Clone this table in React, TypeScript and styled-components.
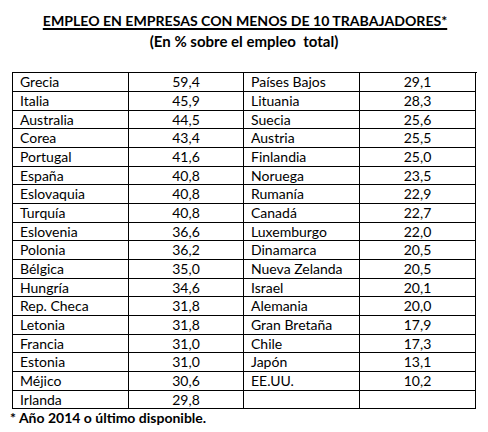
import styled, { createGlobalStyle } from "styled-components"

const GlobalStyle = createGlobalStyle`
  body{
    margin:0;
    background:#fff;
    font-family:Lato, "Open Sans", sans-serif;
    color:#000;
  }
`

const left: [string, string][] = [
  ['Grecia', '59,4'], ['Italia', '45,9'], ['Australia', '44,5'], ['Corea', '43,4'],
  ['Portugal', '41,6'], ['España', '40,8'], ['Eslovaquia', '40,8'], ['Turquía', '40,8'],
  ['Eslovenia', '36,6'], ['Polonia', '36,2'], ['Bélgica', '35,0'], ['Hungría', '34,6'],
  ['Rep. Checa', '31,8'], ['Letonia', '31,8'], ['Francia', '31,0'], ['Estonia', '31,0'],
  ['Méjico', '30,6'], ['Irlanda', '29,8'],
]

const right: [string, string][] = [
  ['Países Bajos', '29,1'], ['Lituania', '28,3'], ['Suecia', '25,6'], ['Austria', '25,5'],
  ['Finlandia', '25,0'], ['Noruega', '23,5'], ['Rumanía', '22,9'], ['Canadá', '22,7'],
  ['Luxemburgo', '22,0'], ['Dinamarca', '20,5'], ['Nueva Zelanda', '20,5'], ['Israel', '20,1'],
  ['Alemania', '20,0'], ['Gran Bretaña', '17,9'], ['Chile', '17,3'], ['Japón', '13,1'],
  ['EE.UU.', '10,2'], ['', ''],
]

const App = () => {
  return <Page>
    <GlobalStyle />
    <Title>EMPLEO EN EMPRESAS CON MENOS DE 10 TRABAJADORES*</Title>
    <Subtitle>(En % sobre el empleo&nbsp; total)</Subtitle>
    <Table>
      {left.map((row, i) => <Row key={i}>
        <Cell>{row[0]}</Cell>
        <Cell $num>{row[1]}</Cell>
        <Cell>{right[i][0]}</Cell>
        <Cell $num>{right[i][1]}</Cell>
      </Row>)}
    </Table>
    <Note>* Año 2014 o último disponible.</Note>
  </Page>
}

const Page = styled.div`
  width:488px;
  height:432px;
  padding-top:11px;
  box-sizing:border-box;
`

const Title = styled.h1`
  margin:0;
  font-size:14.1px;
  font-weight:700;
  text-align:center;
  text-decoration:underline;
  text-underline-offset:2px;
  text-decoration-thickness:1.5px;
  line-height:20px;
  padding-left:2px;
`

const Subtitle = styled.h2`
  margin:0;
  font-size:15px;
  font-weight:700;
  text-align:center;
  line-height:20px;
`

const Table = styled.div`
  margin:21px 0 0 12px;
  width:464px;
  display:grid;
  grid-template-columns:116px 115px 116px 116px;
  grid-template-rows:repeat(6, 19px 19px 18px);
  border-top:1px solid #000;
  border-left:1px solid #000;
`

const Row = styled.div`
  display:contents;
`

const Cell = styled.div<{ $num?: boolean }>`
  border-right:1px solid #000;
  border-bottom:1px solid #000;
  font-size:14px;
  line-height:18px;
  display:flex;
  align-items:center;
  justify-content:${p => p.$num ? 'center' : 'flex-start'};
  padding-left:${p => p.$num ? '0' : '7px'};
  white-space:nowrap;
`

const Note = styled.div`
  margin:1px 0 0 10px;
  font-size:14px;
  font-weight:700;
  line-height:16px;
`

export default App
